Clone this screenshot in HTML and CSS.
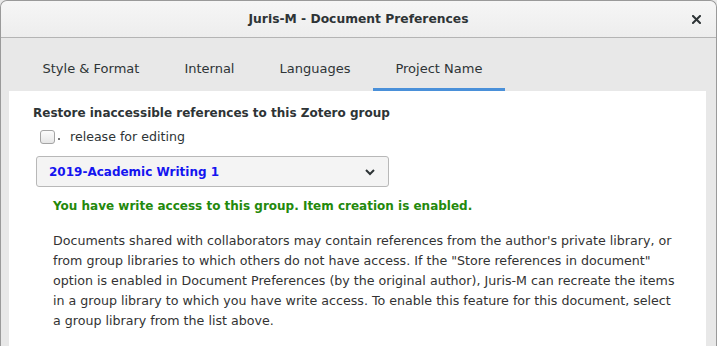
FILE: index.html
```html
<!DOCTYPE html>
<html>
  <head>
    <title>Juris-M - Document Preferences</title>
    <link rel="stylesheet" href="styles.css">
  </head>
  <body>
    <div class="window">
      <div class="titlebar">
        <span></span>
        <span class="title">Juris-M - Document Preferences</span>
        <span class="close">
          <svg width="9" height="9" viewBox="0 0 9 9">
            <path d="M1 1L8 8M8 1L1 8" stroke="#2e3436" stroke-width="2" stroke-linecap="square" />
          </svg>
        </span>
      </div>

      <div class="tabs">
        <div class="tab">Style &amp; Format</div>
        <div class="tab">Internal</div>
        <div class="tab">Languages</div>
        <div class="tab active">Project Name</div>
      </div>

      <div class="panel">
        <h2 class="heading">Restore inaccessible references to this Zotero group</h2>

        <label class="check-row">
          <span class="checkbox"></span>
          <span class="check-dot"></span>
          <span>release for editing</span>
        </label>

        <div class="dropdown">
          <span class="dropdown-value">2019-Academic Writing 1</span>
          <svg width="12" height="8" viewBox="0 0 12 8">
            <path d="M2 2L6 6L10 2" fill="none" stroke="#2e3436" stroke-width="2" />
          </svg>
        </div>

        <p class="access-ok">You have write access to this group. Item creation is enabled.</p>

        <p class="info">
          Documents shared with collaborators may contain references from the author's private library, or
          from group libraries to which others do not have access. If the "Store references in document"
          option is enabled in Document Preferences (by the original author), Juris-M can recreate the items
          in a group library to which you have write access. To enable this feature for this document, select
          a group library from the list above.
        </p>
      </div>
    </div>
  </body>
</html>
```

FILE: styles.css
```css
body {
  margin: 0;
  font-family: "DejaVu Sans", sans-serif;
  color: #2e3436;
  background: #e8e8e8;
}

.window {
  box-sizing: border-box;
  width: 717px;
  height: 346px;
  overflow: hidden;
  border: 1px solid #9a9a9a;
  border-bottom: none;
  border-radius: 7px 7px 0 0;
  background: #e8e8e8;
}

.titlebar {
  display: grid;
  grid-template-columns: 1fr auto 1fr;
  align-items: center;
  height: 36px;
  border-bottom: 1px solid #b4b4b4;
  background: linear-gradient(#f6f6f6, #ededed);
  border-radius: 6px 6px 0 0;
}

.title {
  font-size: 12.3px;
  font-weight: bold;
  color: #2e3436;
}

.close {
  justify-self: end;
  display: flex;
  margin-right: 15px;
}

.tabs {
  display: flex;
  padding-left: 19px;
}

.tab {
  padding: 23px 22.5px 11px;
  line-height: 16px;
  font-size: 13px;
  border-bottom: 3px solid transparent;
}

.tab.active {
  border-bottom-color: #4a90d9;
}

.panel {
  margin: 0 10px 0 8px;
  height: 260px;
  padding: 14px 16px 0 24px;
  background: #fff;
}

.heading {
  margin: 0;
  font-size: 12px;
  line-height: 16px;
}

.check-row {
  display: flex;
  align-items: center;
  margin: 8px 0 0 7px;
  font-size: 12.6px;
  line-height: 16px;
}

.checkbox {
  box-sizing: border-box;
  width: 15px;
  height: 14px;
  border: 1px solid #a4a4a4;
  border-radius: 3px;
  background: linear-gradient(#fbfbfb, #e6e6e6);
}

.check-dot {
  width: 2px;
  height: 2px;
  margin: 3px 10px 0 3px;
  background: #777;
}

.dropdown {
  box-sizing: border-box;
  display: flex;
  align-items: center;
  justify-content: space-between;
  width: 353px;
  height: 31px;
  margin: 11px 0 0 3px;
  padding: 0 12px 0 12px;
  border: 1px solid #b8b8b8;
  border-radius: 3px;
  background: #f4f4f4;
}

.dropdown-value {
  font-size: 12px;
  font-weight: bold;
  color: #1414f0;
}

.access-ok {
  margin: 11px 0 0 20px;
  font-size: 12px;
  line-height: 16px;
  font-weight: bold;
  color: #24890c;
}

.info {
  margin: 17px 10px 0 20px;
  font-size: 12.65px;
  line-height: 20px;
  color: #333;
}
```
